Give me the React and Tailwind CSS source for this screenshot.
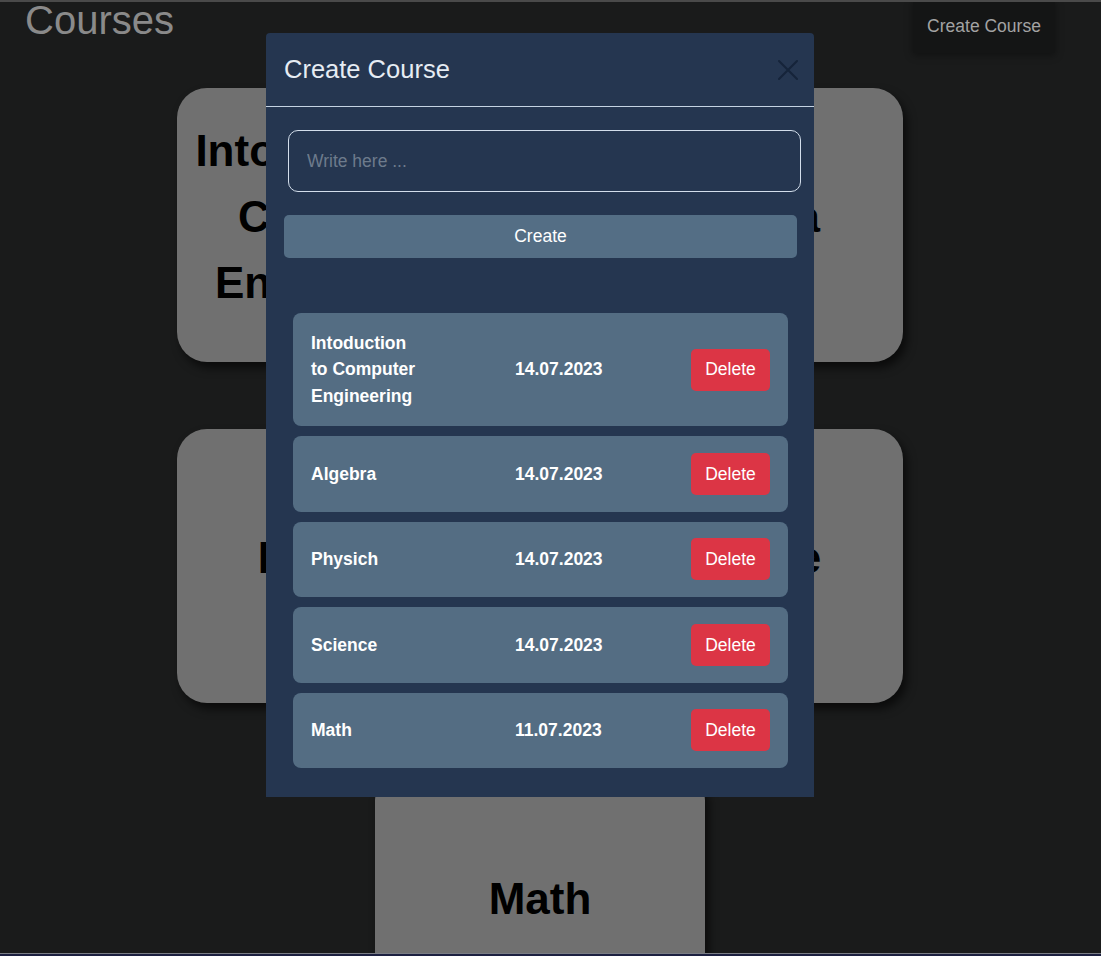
import React from 'react';

const courses = [
  { id: 1, name: 'Intoduction to Computer Engineering', date: '14.07.2023' },
  { id: 2, name: 'Algebra', date: '14.07.2023' },
  { id: 3, name: 'Physich', date: '14.07.2023' },
  { id: 4, name: 'Science', date: '14.07.2023' },
  { id: 5, name: 'Math', date: '11.07.2023' },
];

function CourseCard({ name }) {
  return (
    <div className="w-[330px] h-[274px] shrink-0 rounded-[30px] bg-[#707070] shadow-[4px_6px_10px_rgba(0,0,0,0.6)] flex items-center justify-center text-center px-4 pb-4">
      <p className="text-[44px] font-bold leading-[1.5] text-black">{name}</p>
    </div>
  );
}

function CourseRow({ course }) {
  return (
    <div className="flex items-center rounded-lg bg-[#546d83] pl-[18px] pr-[18px] py-[16.75px] text-[17.5px] text-white">
      <div className="w-[110px] shrink-0 font-bold leading-[26.5px]">{course.name}</div>
      <div className="ml-[94px] font-bold">{course.date}</div>
      <button className="ml-auto h-[42px] w-[79px] rounded-[5px] bg-[#dc3545] text-[17.5px] text-white">
        Delete
      </button>
    </div>
  );
}

export default function App() {
  return (
    <div
      className="relative h-[956px] w-full overflow-hidden bg-[#1a1b1b] border-t-2 border-[#4a4a4a]"
      style={{ fontFamily: '"Liberation Sans", Arial, sans-serif' }}
    >
      <div className="w-[1080px]">
        {/* Cabeçalho */}
        <div className="flex h-[51px] items-start justify-between pl-[25px] pr-[25px]">
          <h1 className="-mt-[2px] text-[40px] leading-none text-[#8a8a8a]">Courses</h1>
          <button className="-mt-[2px] h-[53px] w-[142px] bg-[#141515] text-[17.5px] text-[#a3a3a3] shadow-[0_2px_8px_rgba(0,0,0,0.4)]">
            Create Course
          </button>
        </div>

        {/* Cartões */}
        <div className="mx-auto mt-[35px] flex w-[726px] flex-wrap justify-center gap-x-[66px] gap-y-[67px]">
          {courses.map((c) => (
            <CourseCard key={c.id} name={c.name} />
          ))}
        </div>
      </div>

      {/* Linha inferior */}
      <div className="absolute bottom-0 left-0 right-0 h-[3px] border-t border-[#7a7d85] bg-[#1c2040]" />

      {/* Modal */}
      <div className="absolute left-[266px] top-[31px] flex h-[764px] w-[548px] flex-col rounded-t-[4px] bg-[#253650]">
        <div className="flex h-[74px] shrink-0 items-center justify-between border-b border-[#c5d3e3] pl-[18px] pr-[16px]">
          <h2 className="text-[25.5px] text-[#e6ecf3]">Create Course</h2>
          <svg width="20" height="20" viewBox="0 0 20 20" className="mt-[1px]">
            <path d="M1 1 L19 19 M19 1 L1 19" stroke="#15243a" strokeWidth="2" strokeLinecap="round" />
          </svg>
        </div>

        <div className="ml-[22px] mr-[13px] mt-[23px]">
          <input
            placeholder="Write here ..."
            className="h-[62px] w-full rounded-[10px] border border-[#d3deeb] bg-[#253650] pl-[18px] text-[17.5px] text-white placeholder:text-[#6d7b8c] outline-none"
          />
        </div>

        <button className="ml-[18px] mr-[17px] mt-[23px] h-[43px] rounded-[5px] bg-[#546e85] text-[17.5px] text-white">
          Create
        </button>

        <div className="ml-[27px] mr-[26px] mt-[55px] flex flex-col gap-[10px]">
          {courses.map((c) => (
            <CourseRow key={c.id} course={c} />
          ))}
        </div>
      </div>
    </div>
  );
}
